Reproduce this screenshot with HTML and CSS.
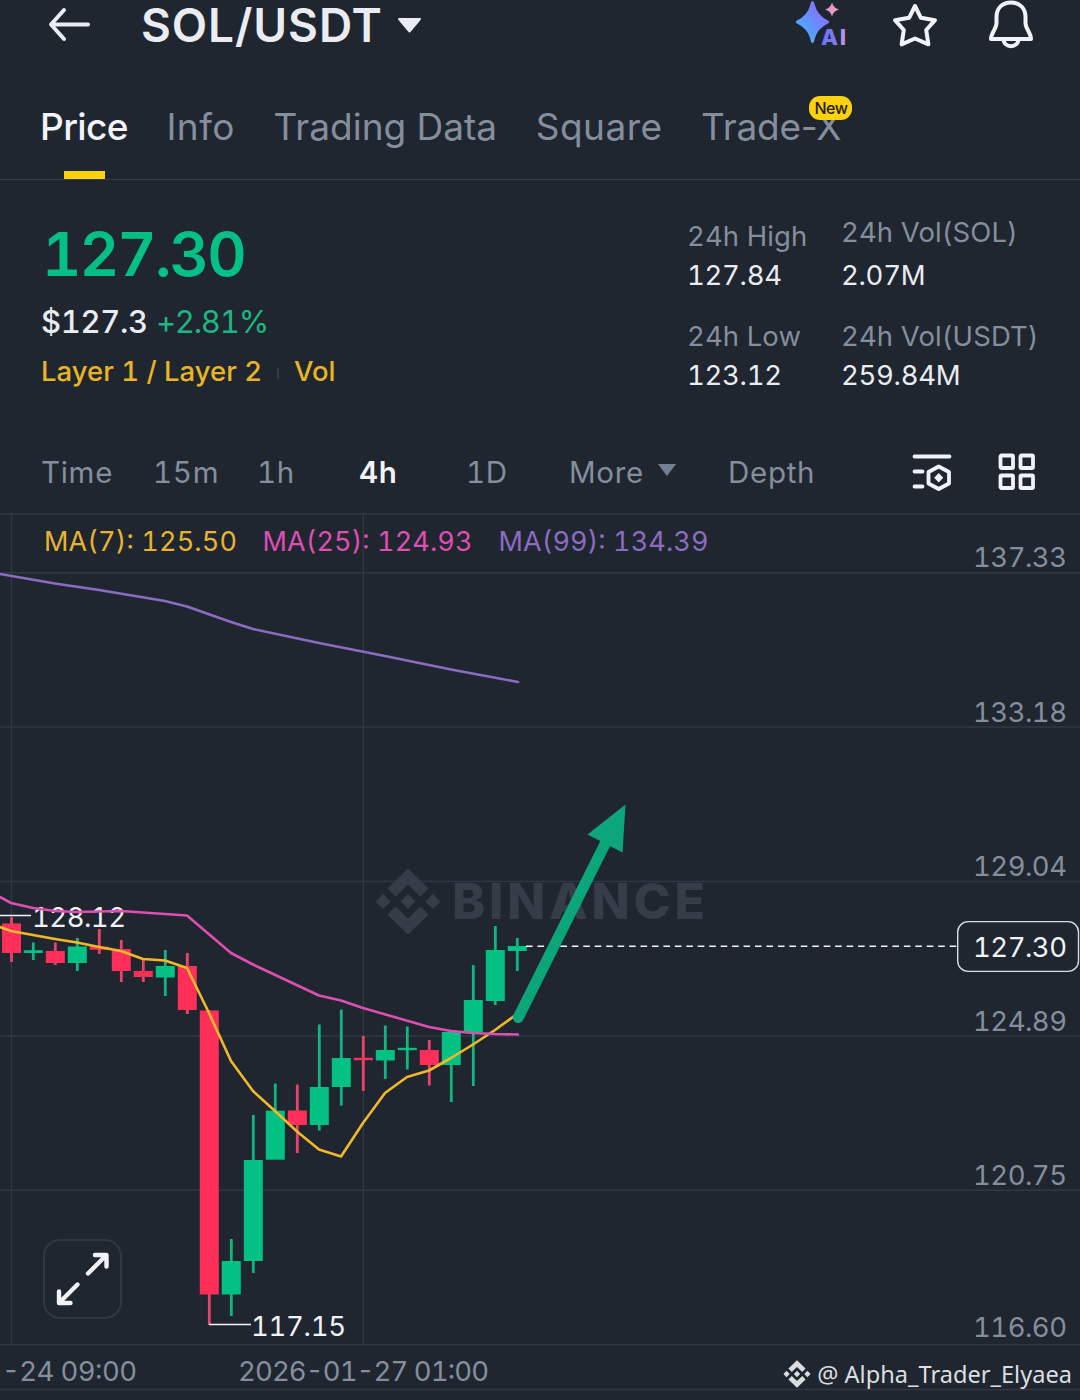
FILE: index.html
```html
<!DOCTYPE html>
<html lang="en">
<head>
  <meta charset="UTF-8" />
  <meta name="viewport" content="width=device-width, initial-scale=1.0"/>
  <title>SOL/USDT</title>
  <link rel="stylesheet" href="styles.css">
</head>
<body>
  <header class="header">
    <svg class="back" width="44" height="36" viewBox="0 0 44 36">
      <path d="M16 3 L3 17.5 L16 32 M3.5 17.5 H40"/>
    </svg>
    <h1>SOL/USDT</h1>
    <svg class="caret" width="25" height="17" viewBox="0 0 25 17">
      <path d="M2 2 H23 L12.5 14.5 Z"/>
    </svg>
    <div class="header-icons">
      <svg width="52" height="50" viewBox="0 0 52 50">
        <defs>
          <linearGradient id="star" x1="0" y1="1" x2="1" y2="0">
            <stop offset="0.15" stop-color="#45b2ff"/>
            <stop offset="0.8" stop-color="#8670ff"/>
          </linearGradient>
          <linearGradient id="spark" x1="0" y1="1" x2="1" y2="0">
            <stop offset="0" stop-color="#c490ff"/>
            <stop offset="1" stop-color="#ffa08c"/>
          </linearGradient>
          <linearGradient id="ai" x1="0" y1="0" x2="1" y2="0">
            <stop offset="0" stop-color="#6a74ff"/>
            <stop offset="0.55" stop-color="#8279f5"/>
            <stop offset="1" stop-color="#c79af0"/>
          </linearGradient>
        </defs>
        <path fill="url(#star)" d="M18.5 1 Q20 1 20.8 5 Q23.5 15.5 34 20.5 Q36.5 22 34 23.5 Q23.5 28.5 20.8 38.5 Q20 43 18.5 43 Q17 43 16.2 38.5 Q13.5 28.5 3 23.5 Q0.5 22 3 20.5 Q13.5 15.5 16.2 5 Q17 1 18.5 1 Z"/>
        <path fill="url(#spark)" d="M38 2.5 Q39.5 8 45 9.5 Q39.5 11 38 16.5 Q36.5 11 31 9.5 Q36.5 8 38 2.5 Z"/>
        <text class="ai-text" x="27" y="45" textLength="25">AI</text>
      </svg>
      <svg class="line-icon" width="48" height="48" viewBox="0 0 48 48">
        <path d="M24 6 L29.9 17.8 L44 20.2 L35.2 30 L37.4 44.3 L24 38.5 L10.6 44.3 L12.8 30 L4 20.2 L18.1 17.8 Z"/>
      </svg>
      <svg class="line-icon" width="48" height="50" viewBox="0 0 48 50">
        <path d="M24 2.5 C14.5 2.5 9.5 9 9.5 17 V23 C9.5 29 4 32.5 4 39 H44 C44 32.5 38.5 29 38.5 23 V17 C38.5 9 33.5 2.5 24 2.5 Z"/>
        <path d="M16.5 39 C16.5 48.5 31.5 48.5 31.5 39"/>
      </svg>
    </div>
  </header>

  <nav class="tabs">
    <span class="tab active">Price</span>
    <span class="tab">Info</span>
    <span class="tab trading">Trading Data</span>
    <span class="tab">Square</span>
    <span class="tab trade-x">Trade-X<span class="badge">New</span></span>
  </nav>

  <section class="summary">
    <div class="quote">
      <div class="last">127.30</div>
      <div class="fiat">$127.3 <span class="change">+2.81%</span></div>
      <div class="tags"><span>Layer 1 / Layer 2</span><i class="divider"></i><span>Vol</span></div>
    </div>
    <div class="stats">
      <div class="stat"><div class="label">24h High</div><div class="value">127.84</div></div>
      <div class="stat"><div class="label raised">24h Vol(SOL)</div><div class="value">2.07M</div></div>
      <div class="stat"><div class="label">24h Low</div><div class="value">123.12</div></div>
      <div class="stat"><div class="label">24h Vol(USDT)</div><div class="value">259.84M</div></div>
    </div>
  </section>

  <div class="intervals">
    <span>Time</span>
    <span>15m</span>
    <span>1h</span>
    <span class="selected">4h</span>
    <span>1D</span>
    <span class="more">More
      <svg width="20" height="14" viewBox="0 0 20 14"><path d="M1 1 H19 L10 13 Z"/></svg>
    </span>
    <span>Depth</span>
    <svg class="tool" width="40" height="38" viewBox="0 0 40 38">
      <path d="M2.5 3.5 H37.5 M2.5 18.5 H10.5 M2.5 33.5 H10.5"/>
      <path d="M26.7 13.5 L37 19 V30.5 L26.7 36 L16.5 30.5 V19 Z"/>
      <path class="dot" d="M26.7 20 L31.2 24.7 L26.7 29.4 L22.2 24.7 Z"/>
    </svg>
    <svg class="tool" width="38" height="38" viewBox="0 0 38 38">
      <rect x="2.5" y="2.5" width="12.5" height="12.5" rx="1"/>
      <rect x="22.5" y="2.5" width="12.5" height="12.5" rx="1"/>
      <rect x="2.5" y="22.5" width="12.5" height="12.5" rx="1"/>
      <rect x="22.5" y="22.5" width="12.5" height="12.5" rx="1"/>
    </svg>
  </div>

  <main class="chart-wrap">
    <svg class="chart" width="1080" height="886" viewBox="0 514 1080 886">
      <!-- grid -->
      <g class="grid">
        <path d="M0 572.7 H1080 M0 727 H1080 M0 881.5 H1080 M0 1036 H1080 M0 1190.3 H1080"/>
        <path d="M11.5 514 V1344 M363.3 514 V1344"/>
        <path d="M0 1344.7 H1080 M0 1389.5 H1080"/>
      </g>

      <!-- watermark -->
      <g class="watermark">
        <g id="logo">
          <path d="M408 868.5 L428.5 888.5 L420.5 896.5 L408 884.5 L395.5 896.5 L387.5 888.5 Z"/>
          <path d="M408 934.5 L428.5 914.5 L420.5 906.5 L408 918.5 L395.5 906.5 L387.5 914.5 Z"/>
          <path d="M383 894 L390.5 901.5 L383 909 L375.5 901.5 Z"/>
          <path d="M433 894 L440.5 901.5 L433 909 L425.5 901.5 Z"/>
          <path d="M408 894 L415.5 901.5 L408 909 L400.5 901.5 Z"/>
        </g>
        <text x="452" y="919" textLength="253">BINANCE</text>
      </g>

      <!-- moving averages legend -->
      <g class="legend">
        <text class="ma7" x="44" y="551" textLength="193">MA(7): 125.50</text>
        <text class="ma25" x="262.5" y="551" textLength="210">MA(25): 124.93</text>
        <text class="ma99" x="498.5" y="551" textLength="210">MA(99): 134.39</text>
      </g>

      <!-- price axis -->
      <g class="axis">
        <text x="973" y="567" textLength="94">137.33</text>
        <text x="973" y="722" textLength="94">133.18</text>
        <text x="973" y="876" textLength="94">129.04</text>
        <text x="973" y="1031" textLength="94">124.89</text>
        <text x="973" y="1185" textLength="94">120.75</text>
        <text x="973" y="1337" textLength="94">116.60</text>
        <text x="2" y="1381" textLength="135">-24 09:00</text>
        <text x="238" y="1381" textLength="251">2026-01-27 01:00</text>
      </g>

      <!-- candles -->
      <g class="down">
        <path d="M11.5 917 V962 M55.3 942.5 V965 M99.3 929 V954 M121.3 940 V982 M143.3 959 V982 M187.3 953 V1014 M209.3 1010 V1325 M297.3 1084.5 V1153 M363.3 1036 V1091 M429.3 1040 V1085.5"/>
        <rect x="2" y="923.5" width="19" height="29.5"/>
        <rect x="45.8" y="951" width="19" height="12"/>
        <rect x="89.8" y="946.7" width="19" height="3"/>
        <rect x="111.8" y="949" width="19" height="22"/>
        <rect x="133.8" y="971" width="19" height="6"/>
        <rect x="177.8" y="966" width="19" height="44"/>
        <rect x="199.8" y="1010.5" width="19" height="284"/>
        <rect x="287.8" y="1110.5" width="19" height="14.5"/>
        <rect x="353.8" y="1057.8" width="19" height="2.4"/>
        <rect x="419.8" y="1050" width="19" height="15"/>
      </g>
      <g class="up">
        <path d="M33.3 942.5 V960 M77.3 938 V971 M165.3 950 V996 M231.3 1239 V1316 M253.3 1115 V1273 M275.3 1083.5 V1159 M319.3 1024.5 V1130.5 M341.3 1009.5 V1105.5 M385.3 1025.5 V1079 M407.3 1026.5 V1069.5 M451.3 1032 V1102 M473.3 965 V1086 M495.3 926 V1005 M517.3 938 V971"/>
        <rect x="23.8" y="950.2" width="19" height="2.8"/>
        <rect x="67.8" y="946.5" width="19" height="16.5"/>
        <rect x="155.8" y="966" width="19" height="11.5"/>
        <rect x="221.8" y="1261" width="19" height="33.5"/>
        <rect x="243.8" y="1160" width="19" height="101"/>
        <rect x="265.8" y="1110.7" width="19" height="49"/>
        <rect x="309.8" y="1087" width="19" height="38"/>
        <rect x="331.8" y="1058" width="19" height="29"/>
        <rect x="375.8" y="1050" width="19" height="10.5"/>
        <rect x="397.8" y="1047.8" width="19" height="2.4"/>
        <rect x="441.8" y="1032" width="19" height="33"/>
        <rect x="463.8" y="1000" width="19" height="32"/>
        <rect x="485.8" y="950" width="19" height="51"/>
        <rect x="507.8" y="946" width="19" height="5"/>
      </g>

      <!-- high and low marks -->
      <g class="marks">
        <path d="M0 915.5 H31 M209 1324.5 H251"/>
        <text x="32" y="927" textLength="94">128.12</text>
        <text x="251" y="1336" textLength="95">117.15</text>
      </g>

      <!-- moving averages -->
      <g class="ma">
        <path class="line7" d="M0 927 L11 931 L33 935 L55 939 L77 942.5 L99 947 L121 951 L143 959 L165 960.5 L187 968 L209 1013 L231 1061 L253 1091 L275 1111 L297 1131.5 L319 1149.5 L341 1156.5 L363 1123 L385 1093 L407 1077 L429 1070.5 L451 1058 L473 1044.5 L495 1030 L517 1014"/>
        <path class="line25" d="M0 897 L11 903 L33 908 L55 911 L77 912 L99 911.5 L121 911 L187 915.5 L231 953 L253 964.5 L319 995.5 L341 1000.5 L363 1008 L429 1027 L451 1031 L473 1033 L495 1034 L518 1034.5"/>
        <path class="line99" d="M0 574 L55 583.5 L99 590 L165 601 L187 606.5 L231 622 L253 629 L319 643 L385 656 L451 669.5 L518 682"/>
      </g>

      <!-- current price -->
      <path class="price-line" d="M526 946.3 H957"/>
      <rect class="price-tag" x="957.7" y="921.6" width="120.8" height="49.8" rx="10.5"/>
      <text class="price-text" x="973" y="957" textLength="94">127.30</text>

      <!-- trend arrow -->
      <path class="arrow-shaft" d="M518.3 1017.5 L606 842"/>
      <path class="arrow-head" d="M625.5 804.5 L587.5 834.5 L622.5 852.5 Z"/>
    </svg>

    <button class="expand">
      <svg width="54" height="54" viewBox="0 0 54 54">
        <path d="M32 21.5 L50 3.5 M39 3 H50.5 V14.5"/>
        <path d="M21.5 32.5 L3.5 50.5 M3 39.5 V51 H14.5"/>
      </svg>
    </button>

    <div class="author">
      <svg width="28" height="28" viewBox="375 868 66 67"><use href="#logo"/></svg>
      <span>@ Alpha_Trader_Elyaea</span>
    </div>
  </main>
</body>
</html>
```
FILE: styles.css
```css
* {
  margin: 0;
  padding: 0;
  box-sizing: border-box;
}

body {
  width: 1080px;
  height: 1400px;
  overflow: hidden;
  background: #1f2630;
  color: #eaecf2;
  font-family: Inter, "Liberation Sans", sans-serif;
  font-variant-numeric: tabular-nums;
}

svg {
  display: block;
  flex: none;
}

.header {
  height: 50px;
  display: flex;
  align-items: center;
  padding-left: 48px;
}

.back {
  fill: none;
  stroke: #eaecf2;
  stroke-width: 4;
  stroke-linecap: round;
  stroke-linejoin: round;
}

h1 {
  margin-left: 49px;
  font-size: 46px;
  font-weight: 600;
  line-height: 50px;
  letter-spacing: 0.9px;
}

.caret {
  margin-left: 14px;
  fill: #eaecf2;
  stroke: #eaecf2;
  stroke-width: 2;
  stroke-linejoin: round;
}

.header-icons {
  display: flex;
  margin-left: auto;
  margin-right: 45px;
  gap: 48px;
}

.header-icons svg:first-child {
  margin-right: -3px;
}

.ai-text {
  font-size: 22px;
  font-weight: 800;
  fill: url(#ai);
}

.line-icon {
  fill: none;
  stroke: #f1f3f9;
  stroke-width: 4;
  stroke-linejoin: round;
}

.tabs {
  height: 130px;
  display: flex;
  align-items: center;
  gap: 38.5px;
  padding: 25px 40px 0;
  border-bottom: 1px solid #333b47;
  font-size: 37px;
  font-variant-numeric: normal;
  line-height: 44px;
  color: #858e9c;
}

.tab {
  position: relative;
  letter-spacing: 0.5px;
}

.tab.active {
  color: #f1f3f9;
  font-weight: 500;
  letter-spacing: -0.6px;
}

.tab.active::after {
  content: '';
  position: absolute;
  left: 24px;
  top: 66px;
  width: 41px;
  height: 8px;
  background: #fcd20c;
}

.tab.trading {
  letter-spacing: 0;
}

.tab.trade-x {
  letter-spacing: -0.2px;
}

.badge {
  position: absolute;
  right: -11px;
  top: -9px;
  width: 43px;
  height: 24px;
  border-radius: 11px;
  background: #fcd20c;
  color: #262014;
  font-size: 16px;
  font-weight: 500;
  line-height: 24px;
  letter-spacing: -0.5px;
  text-align: center;
}

.summary {
  height: 260px;
  display: flex;
  justify-content: space-between;
  padding-left: 41px;
}

.last {
  margin-top: 37px;
  font-size: 61px;
  font-weight: 600;
  line-height: 74px;
  letter-spacing: -1.8px;
  margin-left: 1px;
  color: #04c087;
}

.fiat {
  margin-top: 12px;
  font-size: 31px;
  font-weight: 500;
  line-height: 38px;
  letter-spacing: -0.3px;
}

.change {
  color: #1fb585;
  font-weight: 400;
  letter-spacing: -1.2px;
}

.tags {
  display: flex;
  align-items: center;
  margin-top: 13px;
  font-size: 27.5px;
  font-weight: 500;
  line-height: 34px;
  color: #e9b425;
}

.divider {
  width: 2px;
  height: 11px;
  margin: 5px 15px 0;
  background: #333b47;
}

.stats {
  width: 393px;
  display: grid;
  grid-template-columns: 154px 1fr;
  grid-auto-rows: 100px;
  margin-top: 39px;
  font-size: 27.5px;
  line-height: 34px;
}

.label {
  color: #858e9c;
  letter-spacing: 0.1px;
}

.label.raised {
  margin-top: -4px;
  margin-bottom: 8.5px;
}

.value {
  margin-top: 4.5px;
  letter-spacing: -0.3px;
}

.intervals {
  height: 75px;
  display: grid;
  grid-template-columns: 112px 104px 102px 107px 103px 159px 184px 86px auto;
  align-items: center;
  padding: 0 0 9px 41px;
  border-bottom: 2px solid #2b333e;
  font-size: 29.5px;
  letter-spacing: 0.7px;
  color: #858e9c;
}

.selected {
  color: #f1f3f9;
  font-weight: 600;
}

.more {
  display: flex;
  align-items: center;
  gap: 13px;
}

.more svg {
  margin-top: -4px;
  fill: #737f93;
}

.tool {
  margin-top: -1px;
  fill: none;
  stroke: #f1f3f9;
  stroke-width: 3.8;
  stroke-linecap: round;
  stroke-linejoin: round;
}

.tool .dot {
  fill: #f1f3f9;
  stroke: none;
}

.chart-wrap {
  position: relative;
  height: 886px;
  margin-top: -1px;
}

.grid {
  fill: none;
  stroke: #303843;
  stroke-width: 1.4;
}

.watermark {
  fill: #363d48;
}

.watermark text {
  font-size: 50px;
  font-weight: 800;
}

.legend {
  font-size: 27px;
}

.ma7 {
  fill: #e6b430;
}

.ma25 {
  fill: #dd4fb0;
}

.ma99 {
  fill: #8c6cc0;
}

.axis {
  font-size: 27.5px;
  fill: #858e9c;
}

.down {
  fill: #ff2f59;
  stroke: none;
}

.up {
  fill: #02c182;
  stroke: none;
}

.down path {
  stroke: #e8446a;
  stroke-width: 2.8;
}

.up path {
  stroke: #12b580;
  stroke-width: 2.8;
}

.marks {
  font-size: 27.5px;
  fill: #f1f3f9;
}

.marks path {
  stroke: #f1f3f9;
  stroke-width: 1.5;
}

.ma {
  fill: none;
  stroke-width: 2.6;
  stroke-linejoin: round;
  stroke-linecap: round;
}

.line7 {
  stroke: #f0b92b;
}

.line25 {
  stroke: #dd4fb0;
}

.line99 {
  stroke: #8c6cc0;
}

.price-line {
  stroke: #f1f3f9;
  stroke-width: 1.5;
  stroke-dasharray: 6.6 4.85;
}

.price-tag {
  fill: #1f2630;
  stroke: #d9dce3;
  stroke-width: 1.4;
}

.price-text {
  font-size: 27.5px;
  fill: #f1f3f9;
}

.arrow-shaft {
  stroke: #0da57a;
  stroke-width: 11;
  stroke-linecap: round;
}

.arrow-head {
  fill: #0da57a;
}

.expand {
  position: absolute;
  left: 43px;
  top: 725px;
  width: 79px;
  height: 80px;
  display: flex;
  align-items: center;
  justify-content: center;
  background: #1f2630;
  border: 2px solid #303843;
  border-radius: 17px;
}

.expand path {
  fill: none;
  stroke: #f1f3f9;
  stroke-width: 4.4;
  stroke-linecap: round;
  stroke-linejoin: round;
}

.author {
  position: absolute;
  right: 8px;
  bottom: 8px;
  display: flex;
  align-items: center;
  gap: 6px;
  font-family: "Noto Sans", sans-serif;
  font-size: 23.6px;
  line-height: 36px;
  color: #dcdde0;
}

.author svg {
  fill: #dcdde0;
}
```
